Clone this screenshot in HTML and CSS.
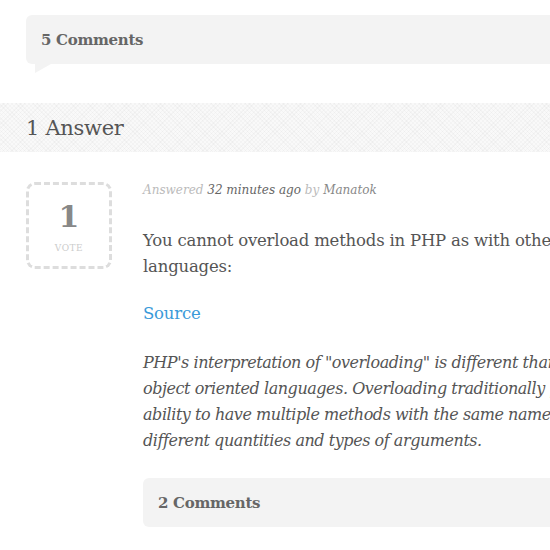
FILE: index.html
```html
<!DOCTYPE html>
<html>
<head>
<meta charset="utf-8">
<link rel="stylesheet" href="styles.css">
</head>
<body>
<div class="page">
  <div class="comments-bar top">
    <span class="comments-label">5 Comments</span>
  </div>

  <div class="answers-header">
    <h2>1 Answer</h2>
  </div>

  <div class="answer">
    <div class="vote-box">
      <div class="vote-count">1</div>
      <div class="vote-label">VOTE</div>
    </div>
    <div class="answer-body">
      <div class="meta"><span class="muted">Answered</span> <span class="dark">32 minutes ago</span> <span class="muted">by</span> <span class="author">Manatok</span></div>
      <p class="text first">You cannot overload methods in PHP as with other<br>languages:</p>
      <p class="text"><a class="link" href="#">Source</a></p>
      <p class="text quote">PHP's interpretation of "overloading" is different than most<br>object oriented languages. Overloading traditionally provides the<br>ability to have multiple methods with the same name but<br>different quantities and types of arguments.</p>
      <div class="comments-bar inner">
        <span class="comments-label">2 Comments</span>
      </div>
    </div>
  </div>
</div>
</body>
</html>
```

FILE: styles.css
```css
html, body {
  margin: 0;
  padding: 0;
  background: #fff;
  overflow: hidden;
}
.page {
  width: 550px;
  font-family: "DejaVu Serif", serif;
  color: #555;
}
.comments-bar {
  position: relative;
  background: #f3f3f3;
  border-radius: 6px 0 0 6px;
  height: 49px;
  display: flex;
  align-items: center;
  padding-left: 15px;
  box-sizing: border-box;
}
.comments-bar::after {
  content: "";
  position: absolute;
  left: 9px;
  bottom: -9px;
  width: 0;
  height: 0;
  border-top: 9px solid #f3f3f3;
  border-right: 16px solid transparent;
}
.comments-bar.top {
  margin: 15px 0 0 26px;
}
.comments-label {
  font-size: 15px;
  font-weight: bold;
  color: #666;
  letter-spacing: -0.3px;
}
.answers-header {
  margin-top: 39px;
  height: 49px;
  display: flex;
  align-items: center;
  padding-left: 26px;
  background-color: #f9f9f9;
  background-image:
    repeating-linear-gradient(45deg, rgba(0,0,0,0.025) 0 1px, transparent 1px 3px),
    repeating-linear-gradient(-45deg, rgba(0,0,0,0.025) 0 1px, transparent 1px 3px);
}
.answers-header h2 {
  margin: 0;
  font-size: 21px;
  font-weight: normal;
  color: #555;
  letter-spacing: -0.3px;
}
.answer {
  display: flex;
  margin-top: 30px;
  padding-left: 26px;
}
.vote-box {
  width: 86px;
  height: 87px;
  box-sizing: border-box;
  border: 3px dashed #ddd;
  border-radius: 9px;
  display: flex;
  flex-direction: column;
  align-items: center;
  flex-shrink: 0;
}
.vote-count {
  margin-top: 15px;
  font-size: 30px;
  line-height: 34px;
  font-weight: bold;
  color: #888;
}
.vote-label {
  margin-top: 9px;
  font-size: 9px;
  color: #ccc;
  letter-spacing: 0.5px;
}
.answer-body {
  margin-left: 31px;
  flex: 1;
  min-width: 0;
}
.meta {
  font-size: 12px;
  font-style: italic;
  line-height: 16px;
  white-space: nowrap;
}
.muted { color: #bbb; }
.dark { color: #666; }
.author { color: #888; }
.text {
  font-size: 16.5px;
  line-height: 26px;
  margin: 21px 0 0;
  color: #555;
  white-space: nowrap;
  letter-spacing: -0.2px;
}
.text.first { margin-top: 30px; }
.link {
  color: #3a9ad9;
  text-decoration: none;
}
.quote {
  font-style: italic;
  font-size: 16px;
  letter-spacing: -0.45px;
  margin-top: 23px;
}
.comments-bar.inner {
  margin-top: 24px;
}
```
